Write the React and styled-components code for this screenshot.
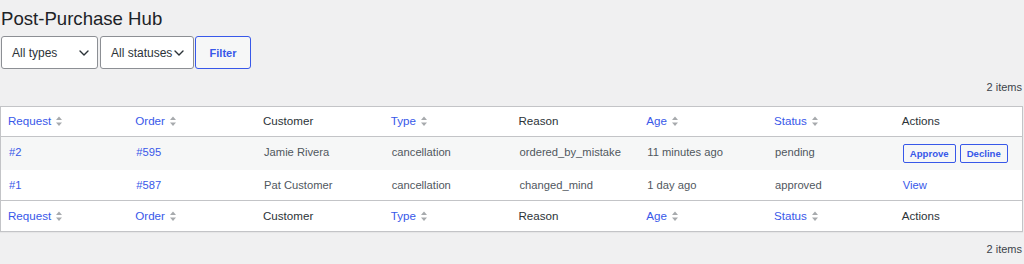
import React from 'react';
import styled, { createGlobalStyle } from 'styled-components';

const GlobalStyle = createGlobalStyle`
  html, body {
    margin: 0;
    padding: 0;
    background: #f0f0f1;
  }
  body {
    font-family: "Liberation Sans", Arial, sans-serif;
    color: #3c434a;
    font-size: 11px;
  }
`;

const Wrap = styled.div`
  width: 1023px;
  padding-top: 4px;
`;

const Title = styled.h1`
  margin: 0;
  font-size: 18.6px;
  font-weight: 400;
  line-height: 30px;
  color: #1d2327;
  padding-left: 1px;
`;

const FilterBar = styled.div`
  display: flex;
  align-items: center;
  gap: 2px;
  margin-top: 2px;
  padding-left: 1px;
`;

const Select = styled.div`
  display: flex;
  align-items: center;
  justify-content: space-between;
  box-sizing: border-box;
  width: ${p => p.$width}px;
  height: 33px;
  padding: 0 ${p => p.$right}px 0 10px;
  background: #fff;
  border: 1px solid #8c8f94;
  border-radius: 3px;
  font-size: 12px;
  color: #2c3338;
  white-space: nowrap;
`;

const Chevron = () => (
  <svg width="10" height="6" viewBox="0 0 10 6">
    <path d="M1 1 L5 5 L9 1" fill="none" stroke="#2c3338" strokeWidth="1.4" strokeLinecap="round" strokeLinejoin="round" />
  </svg>
);

const FilterButton = styled.button`
  box-sizing: border-box;
  height: 33px;
  width: 56px;
  margin-left: -1px;
  border: 1px solid #3858e9;
  border-radius: 3px;
  background: #f6f7f7;
  color: #3858e9;
  font-family: inherit;
  font-size: 11px;
  font-weight: 600;
  padding: 0;
`;

const ItemCount = styled.div`
  text-align: right;
  line-height: 28px;
  color: #3c434a;
  font-size: 11px;
  margin-top: ${p => p.$top}px;
  padding-right: 1px;
`;

const Table = styled.table`
  width: 1023px;
  margin-top: 5px;
  border-collapse: collapse;
  table-layout: fixed;
  background: #fff;
  border: 1px solid #c3c4c7;
  box-shadow: 0 1px 1px rgba(0, 0, 0, 0.04);
`;

const HeadCell = styled.th`
  text-align: left;
  vertical-align: top;
  font-weight: 400;
  font-size: 11.6px;
  line-height: 16px;
  color: #2c3338;
  padding: ${p => (p.$foot ? '7px 8px 7px 7px' : '6px 8px 7px 7px')};
  border-${p => (p.$foot ? 'top' : 'bottom')}: 1px solid #c3c4c7;
`;

const SortLink = styled.span`
  display: inline-flex;
  align-items: center;
  gap: 5px;
  color: #3858e9;
`;

const Row = styled.tr`
  background: ${p => (p.$alt ? '#f6f7f7' : '#fff')};
`;

const Cell = styled.td`
  vertical-align: top;
  padding: 7px 8px;
  line-height: 16px;
  color: #50575e;
  font-size: 11.2px;
  white-space: nowrap;
`;

const Link = styled.span`
  color: #3858e9;
`;

const Actions = styled.div`
  display: flex;
  gap: 4px;
`;

const SmallButton = styled.button`
  box-sizing: border-box;
  height: 19px;
  padding: 0 6px;
  border: 1px solid #3858e9;
  border-radius: 2px;
  background: #f6f7f7;
  color: #3858e9;
  font-family: inherit;
  font-size: 9.6px;
  font-weight: 600;
`;

const SortIcon = () => (
  <svg width="6" height="11" viewBox="0 0 6 11">
    <path d="M0 4 L3 0.5 L6 4 Z" fill="#a7aaad" />
    <path d="M0 6.5 L3 10 L6 6.5 Z" fill="#a7aaad" />
  </svg>
);

const columns = [
  { label: 'Request', sortable: true },
  { label: 'Order', sortable: true },
  { label: 'Customer' },
  { label: 'Type', sortable: true },
  { label: 'Reason' },
  { label: 'Age', sortable: true },
  { label: 'Status', sortable: true },
  { label: 'Actions' },
];

const rows = [
  { id: '#2', order: '#595', customer: 'Jamie Rivera', type: 'cancellation', reason: 'ordered_by_mistake', age: '11 minutes ago', status: 'pending', pending: true },
  { id: '#1', order: '#587', customer: 'Pat Customer', type: 'cancellation', reason: 'changed_mind', age: '1 day ago', status: 'approved' },
];

function HeaderRow({ foot }) {
  return (
    <tr>
      {columns.map(c => (
        <HeadCell key={c.label} $foot={foot}>
          {c.sortable ? (
            <SortLink>
              {c.label}
              <SortIcon />
            </SortLink>
          ) : (
            c.label
          )}
        </HeadCell>
      ))}
    </tr>
  );
}

export default function App() {
  return (
    <Wrap>
      <GlobalStyle />
      <Title>Post-Purchase Hub</Title>
      <FilterBar>
        <Select $width={97} $right={8}>
          All types
          <Chevron />
        </Select>
        <Select $width={94} $right={9}>
          All statuses
          <Chevron />
        </Select>
        <FilterButton>Filter</FilterButton>
      </FilterBar>
      <ItemCount $top={4}>2 items</ItemCount>
      <Table>
        <thead>
          <HeaderRow />
        </thead>
        <tbody>
          {rows.map((r, i) => (
            <Row key={r.id} $alt={i % 2 === 0}>
              <Cell><Link>{r.id}</Link></Cell>
              <Cell><Link>{r.order}</Link></Cell>
              <Cell>{r.customer}</Cell>
              <Cell>{r.type}</Cell>
              <Cell>{r.reason}</Cell>
              <Cell>{r.age}</Cell>
              <Cell>{r.status}</Cell>
              <Cell>
                {r.pending ? (
                  <Actions>
                    <SmallButton>Approve</SmallButton>
                    <SmallButton>Decline</SmallButton>
                  </Actions>
                ) : (
                  <Link>View</Link>
                )}
              </Cell>
            </Row>
          ))}
        </tbody>
        <tfoot>
          <HeaderRow foot />
        </tfoot>
      </Table>
      <ItemCount $top={3}>2 items</ItemCount>
    </Wrap>
  );
}
